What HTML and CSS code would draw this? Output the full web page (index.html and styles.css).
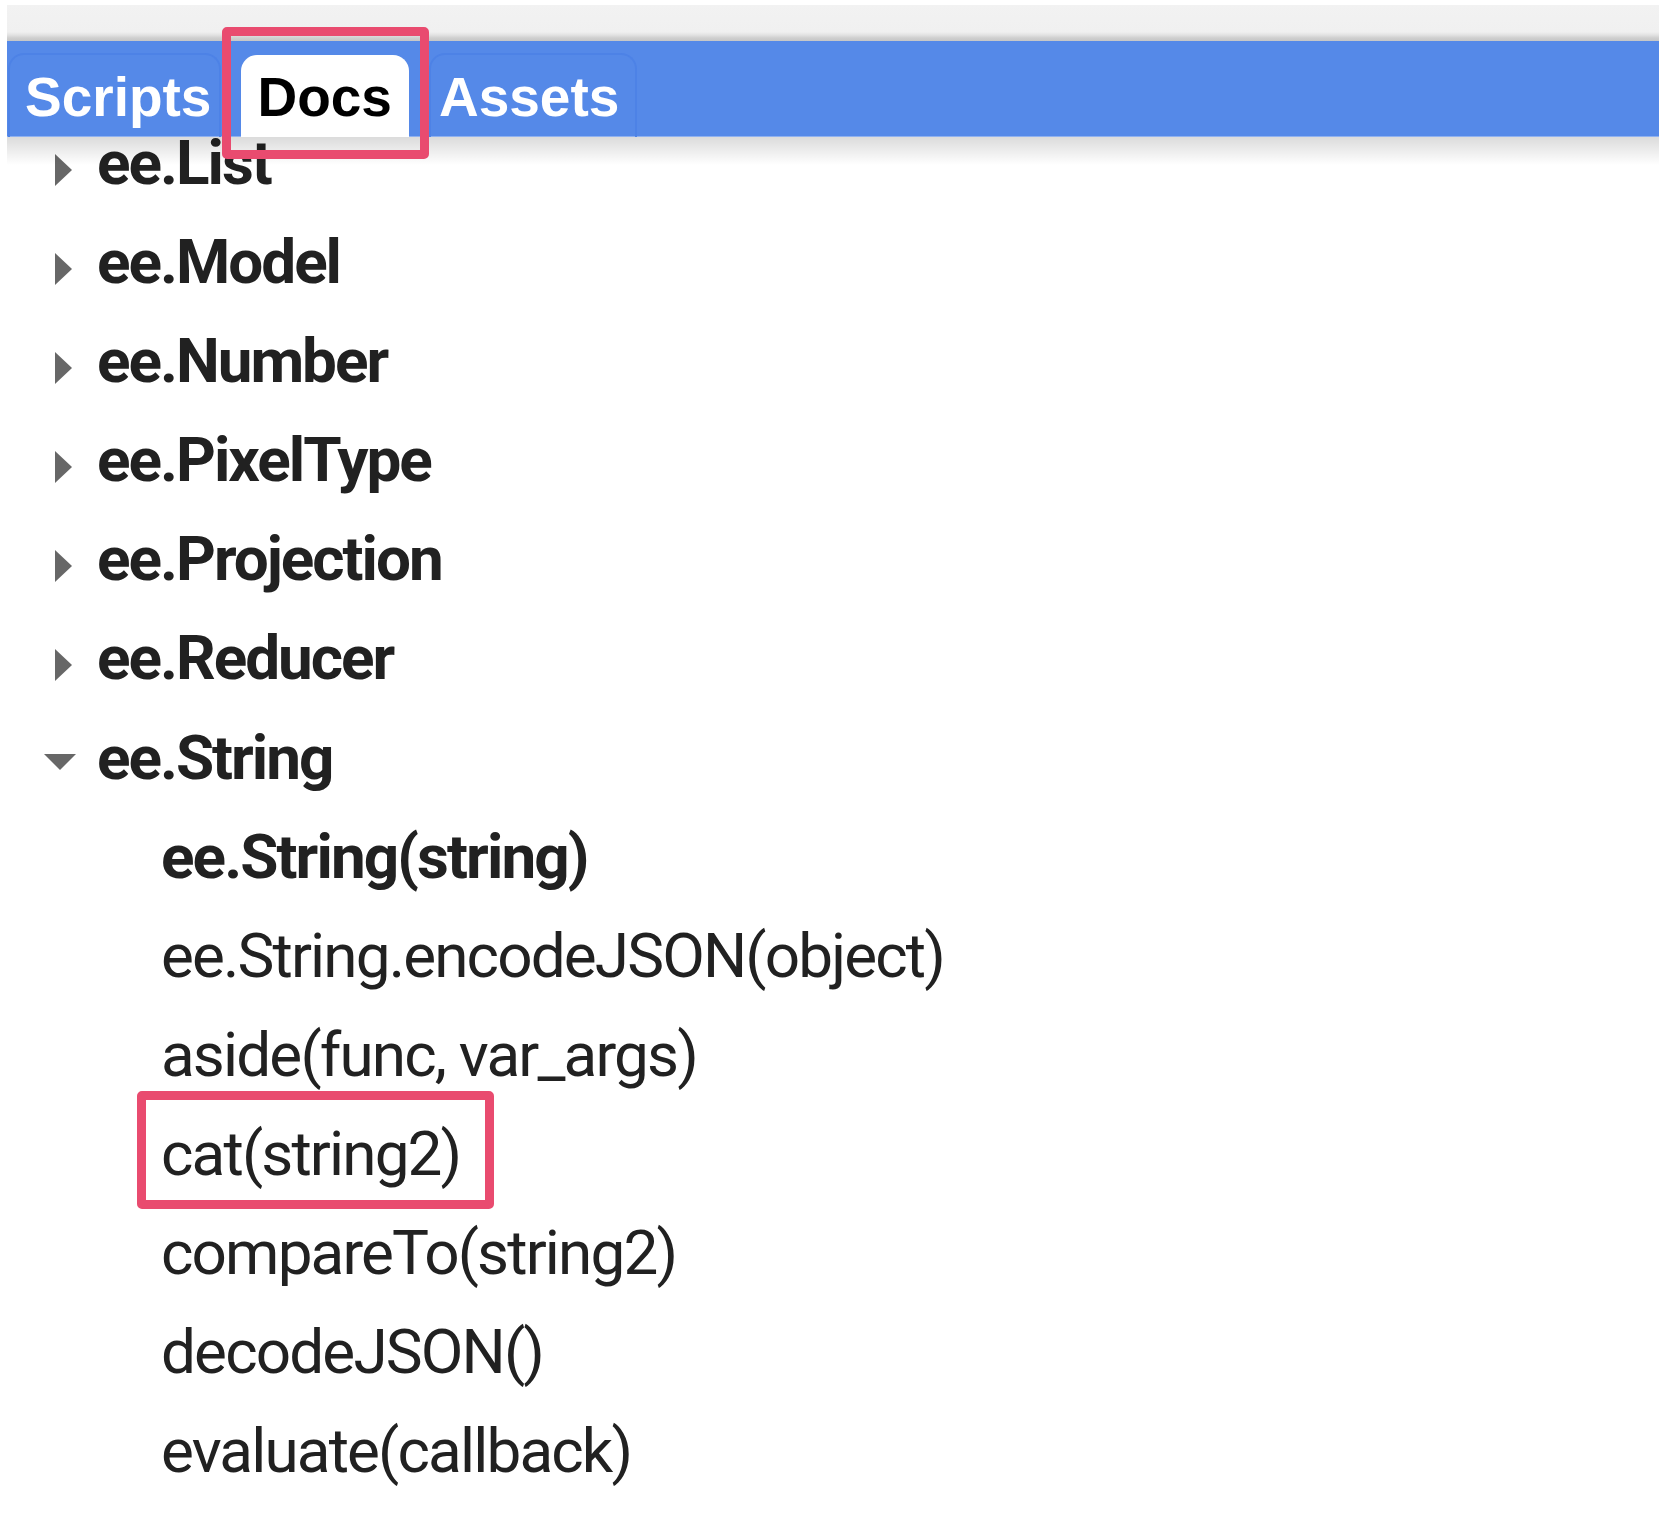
FILE: index.html
```html
<!DOCTYPE html>
<html lang="en">
<head>
<meta charset="utf-8">
<title>Docs</title>
<link rel="stylesheet" href="styles.css">
</head>
<body>
<div class="panel">
  <div class="header">
    <div class="topband"></div>
    <div class="tabbar">
      <div class="tab tab-scripts">Scripts</div>
      <div class="tab tab-docs active">Docs</div>
      <div class="tab tab-assets">Assets</div>
    </div>
    <div class="mark docs-mark"></div>
    <div class="shade"></div>
  </div>
  <ul class="tree">
    <li class="node"><span class="twisty"><span class="caret-r"></span></span><span class="label">ee.List</span></li>
    <li class="node"><span class="twisty"><span class="caret-r"></span></span><span class="label">ee.Model</span></li>
    <li class="node"><span class="twisty"><span class="caret-r"></span></span><span class="label">ee.Number</span></li>
    <li class="node"><span class="twisty"><span class="caret-r"></span></span><span class="label">ee.PixelType</span></li>
    <li class="node"><span class="twisty"><span class="caret-r"></span></span><span class="label">ee.Projection</span></li>
    <li class="node"><span class="twisty"><span class="caret-r"></span></span><span class="label">ee.Reducer</span></li>
    <li class="node"><span class="twisty"><span class="caret-d"></span></span><span class="label">ee.String</span></li>
    <li class="member strong">ee.String(string)</li>
    <li class="member">ee.String.encodeJSON(object)</li>
    <li class="member">aside(func, var_args)</li>
    <li class="member">cat(string2)<span class="mark cat-mark"></span></li>
    <li class="member">compareTo(string2)</li>
    <li class="member">decodeJSON()</li>
    <li class="member">evaluate(callback)</li>
  </ul>
</div>
</body>
</html>
```
FILE: styles.css
```css
html, body {
  margin: 0;
  padding: 0;
  background: #ffffff;
}

.panel {
  margin: 5px 9px 0 7px;
  position: relative;
}

.header {
  position: relative;
  z-index: 2;
  height: 132px;
}

.topband {
  height: 36px;
  background: linear-gradient(#f2f2f2 0, #f0f0f0 27px, #e2e2e2 30px, #cfcfcf 33px, #c6c6c6 36px);
}

.tabbar {
  height: 95px;
  background: #5589e8;
  border-bottom: 1px solid #8fb1f0;
  display: flex;
  align-items: flex-end;
  gap: 20px;
  padding-left: 1px;
}

.tab {
  height: 80px;
  line-height: 80px;
  padding-top: 2px;
  box-sizing: content-box;
  font-family: "Liberation Sans", Arial, sans-serif;
  font-weight: bold;
  font-size: 55px;
  color: #ffffff;
  border: 2px solid #4d82e6;
  border-bottom: none;
  border-radius: 16px 16px 0 0;
  margin-bottom: -1px;
}

.tab-scripts {
  padding-left: 15px;
  padding-right: 8px;
}

.tab-docs {
  padding-left: 14px;
  padding-right: 15px;
}

.tab-assets {
  padding-left: 8px;
  padding-right: 16px;
}

.tab.active {
  background: #ffffff;
  color: #000000;
  border-color: #ffffff;
  padding-top: 0;
}

.shade {
  position: absolute;
  left: 0;
  right: 0;
  top: 132px;
  height: 28px;
  background: linear-gradient(rgba(0, 0, 0, 0.14), rgba(0, 0, 0, 0));
  pointer-events: none;
}

.mark {
  position: absolute;
  box-sizing: border-box;
  border: 9px solid #e94b6f;
  border-radius: 5px;
  z-index: 3;
}

.docs-mark {
  left: 215px;
  top: 22px;
  width: 207px;
  height: 132px;
}

.tree {
  list-style: none;
  margin: -24px 0 0 0;
  padding: 0;
  position: relative;
  z-index: 1;
  font-family: Roboto, "Noto Sans", sans-serif;
  font-size: 62px;
  color: #212121;
}

.tree li {
  height: 99.1px;
  line-height: 99.1px;
  position: relative;
  white-space: nowrap;
}

.node {
  display: flex;
  align-items: center;
  font-weight: bold;
  letter-spacing: -2px;
}

.twisty {
  width: 90px;
  height: 99.1px;
  display: flex;
  align-items: center;
  flex: none;
}

.caret-r {
  display: block;
  width: 0;
  height: 0;
  margin-left: 48px;
  margin-top: 14px;
  border-left: 17px solid #676767;
  border-top: 16px solid transparent;
  border-bottom: 16px solid transparent;
}

.caret-d {
  display: block;
  width: 0;
  height: 0;
  margin-left: 37px;
  margin-top: 9px;
  border-top: 16px solid #676767;
  border-left: 16px solid transparent;
  border-right: 16px solid transparent;
}

.member {
  padding-left: 154px;
  font-weight: normal;
  letter-spacing: -1.85px;
}

.member.strong {
  font-weight: bold;
  letter-spacing: -1.9px;
}

.cat-mark {
  left: 130px;
  top: -13px;
  width: 357px;
  height: 118px;
}
```
